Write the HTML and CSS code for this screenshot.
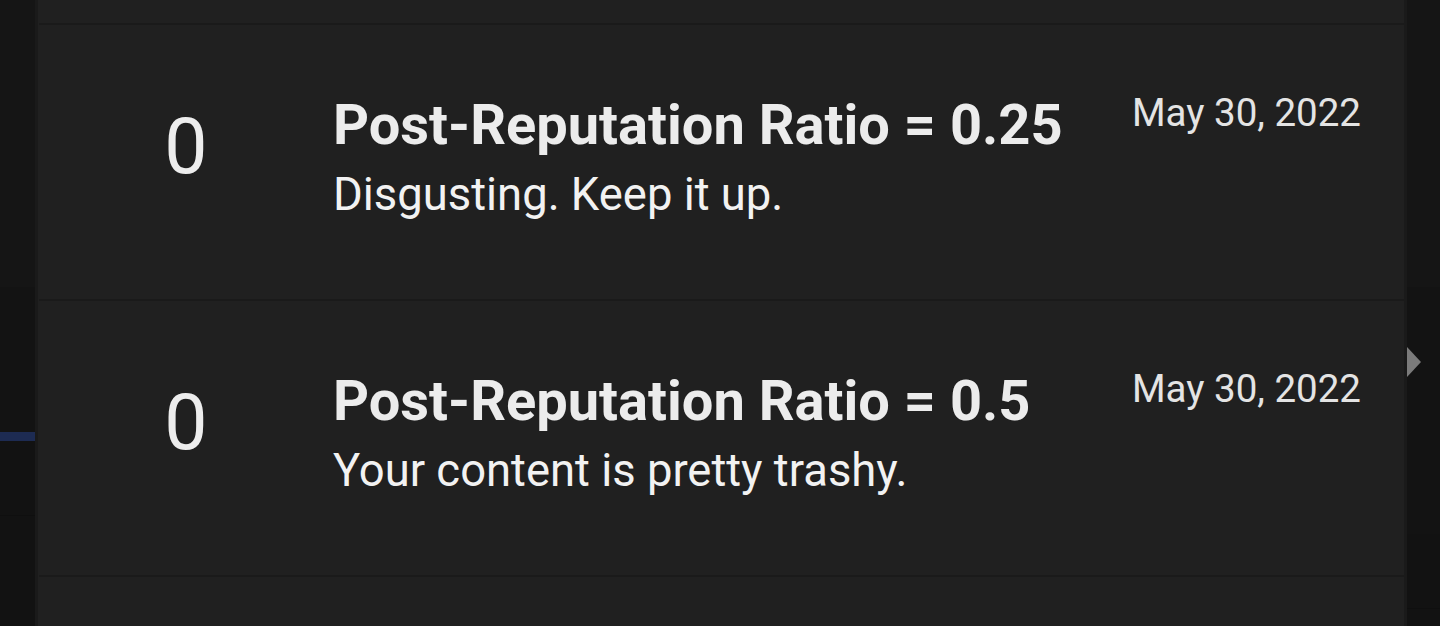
FILE: index.html
```html
<!DOCTYPE html>
<html lang="en">
<head>
    <meta charset="UTF-8">
    <meta name="viewport" content="width=device-width, initial-scale=1.0">
    <title>Reputation Awards</title>
    <link rel="stylesheet" href="styles.css">
</head>
<body>

    <div class="page">
        <div class="side side-left">
            <div class="band band-top"></div>
            <div class="band band-mid"></div>
            <div class="nav-active"></div>
            <div class="band band-low"></div>
        </div>

        <div class="panel">
            <div class="row row-stub"></div>

            <div class="row">
                <div class="score">0</div>
                <div class="body">
                    <div class="title">Post-Reputation Ratio = 0.25</div>
                    <div class="desc">Disgusting. Keep it up.</div>
                </div>
                <div class="date">May 30, 2022</div>
            </div>

            <div class="row">
                <div class="score">0</div>
                <div class="body">
                    <div class="title">Post-Reputation Ratio = 0.5</div>
                    <div class="desc">Your content is pretty trashy.</div>
                </div>
                <div class="date">May 30, 2022</div>
            </div>

            <div class="row"></div>
        </div>

        <div class="side side-right">
            <div class="band band-top"></div>
            <div class="arrow-wrap">
                <div class="arrow"></div>
            </div>
            <div class="band band-mid"></div>
            <div class="band band-low"></div>
        </div>
    </div>

</body>
</html>
```

FILE: styles.css
```css
body {
    margin: 0;
    background-color: #121212;
    font-family: Roboto, "Liberation Sans", sans-serif;
    color: #ededed;
    height: 626px;
    overflow: hidden;
}
.page {
    display: flex;
    height: 626px;
}
.side {
    display: flex;
    flex-direction: column;
    background-color: #121212;
}
.side-left {
    width: 35px;
}
.side-right {
    width: 33px;
}
.band-top {
    height: 287px;
    background-color: #151515;
}
.band-mid {
    height: 145px;
    background-color: #131313;
}
.side-right .band-mid {
    height: 94px;
}
.band-low {
    height: 74px;
    background-color: #121212;
    border-bottom: 1px solid #0f0f0f;
}
.nav-active {
    height: 9px;
    background-color: #1d2b52;
}
.arrow-wrap {
    height: 153px;
    display: flex;
    align-items: center;
    background-color: #131313;
}
.arrow {
    width: 0;
    height: 0;
    border-top: 15px solid transparent;
    border-bottom: 15px solid transparent;
    border-left: 14px solid #7b7b7b;
    margin-top: -4px;
}
.panel {
    flex: 1;
    background-color: #202020;
    border-left: 3px solid #1a1a1a;
    border-right: 3px solid #1a1a1a;
    overflow: hidden;
}
.row {
    display: grid;
    grid-template-columns: 294px 1fr auto;
    height: 274px;
    padding-right: 43px;
    margin: 0 0 0 1px;
    border-bottom: 2px solid #1a1a1a;
}
.row-stub {
    height: 23px;
}
.score {
    text-align: center;
    font-size: 77px;
    font-weight: 400;
    line-height: 90px;
    padding-top: 77px;
}
.body {
    padding-top: 69px;
}
.title {
    font-size: 56px;
    font-weight: 700;
    line-height: 63px;
    color: #ececec;
}
.desc {
    font-size: 45.4px;
    line-height: 49px;
    margin-top: 13px;
    color: #f2f2f2;
}
.date {
    font-size: 38.5px;
    line-height: 44px;
    padding-top: 66px;
    color: #e4e4e4;
}
```
